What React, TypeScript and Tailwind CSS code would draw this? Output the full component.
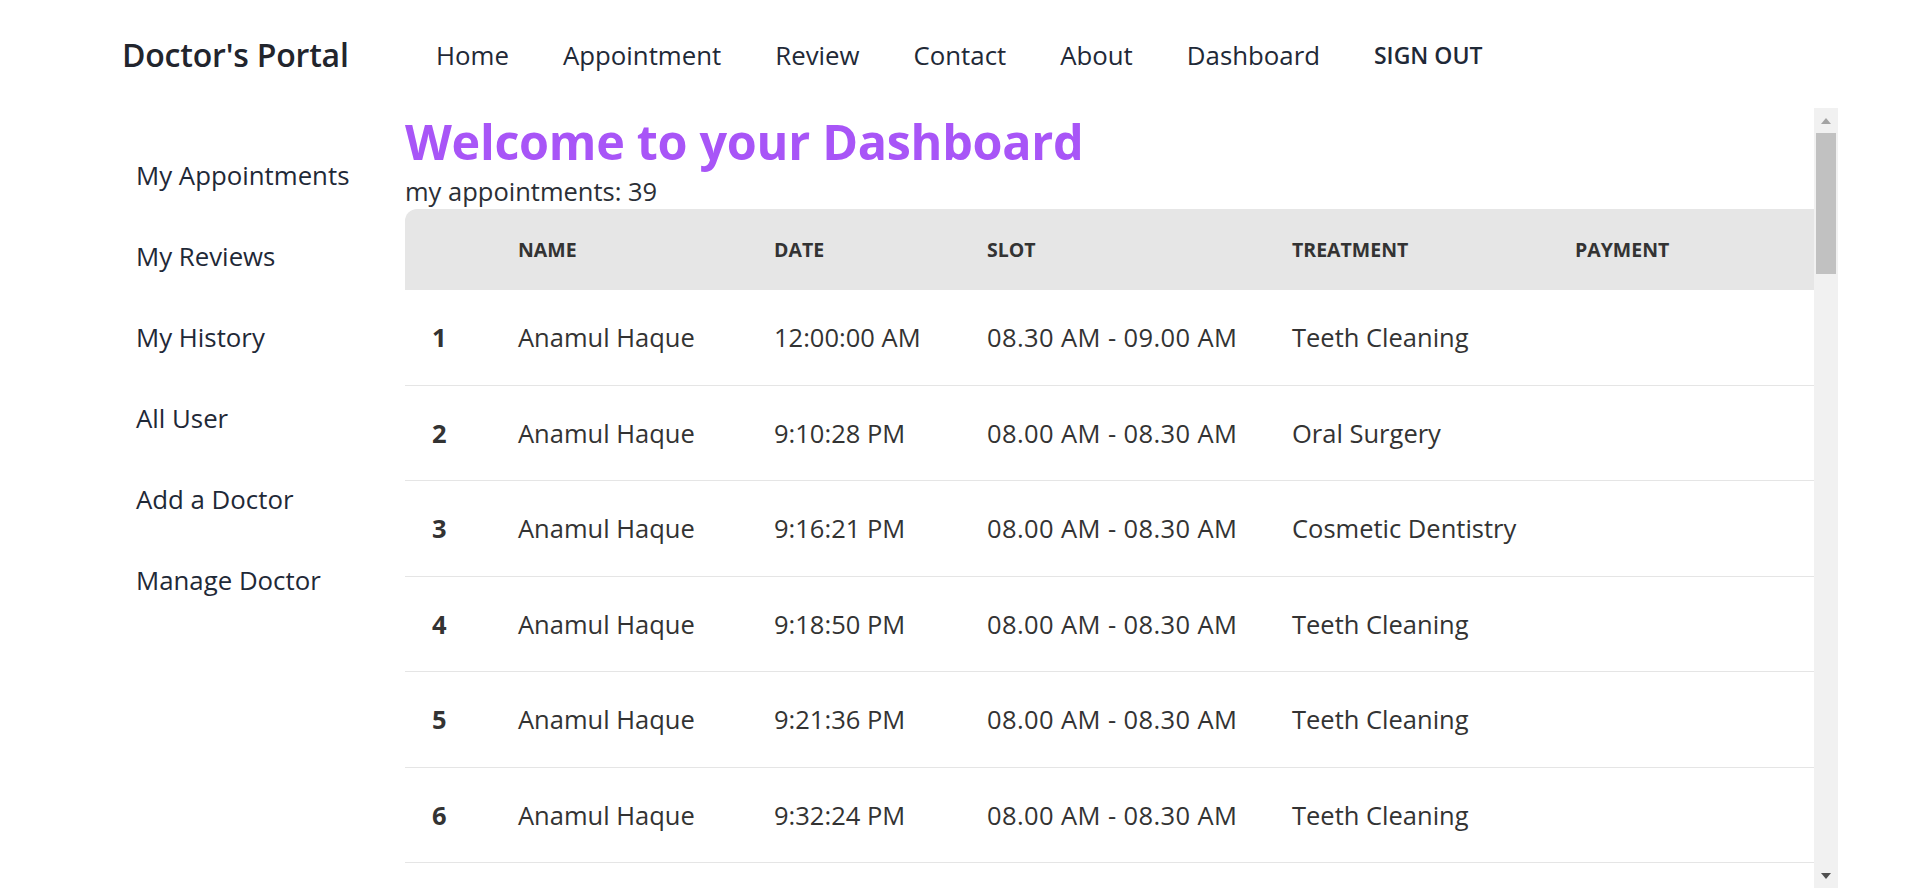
import React from "react";

type Appointment = {
  name: string;
  date: string;
  slot: string;
  treatment: string;
  payment?: string;
};

const firstRows: Appointment[] = [
  { name: "Anamul Haque", date: "12:00:00 AM", slot: "08.30 AM - 09.00 AM", treatment: "Teeth Cleaning" },
  { name: "Anamul Haque", date: "9:10:28 PM", slot: "08.00 AM - 08.30 AM", treatment: "Oral Surgery" },
  { name: "Anamul Haque", date: "9:16:21 PM", slot: "08.00 AM - 08.30 AM", treatment: "Cosmetic Dentistry" },
  { name: "Anamul Haque", date: "9:18:50 PM", slot: "08.00 AM - 08.30 AM", treatment: "Teeth Cleaning" },
  { name: "Anamul Haque", date: "9:21:36 PM", slot: "08.00 AM - 08.30 AM", treatment: "Teeth Cleaning" },
  { name: "Anamul Haque", date: "9:32:24 PM", slot: "08.00 AM - 08.30 AM", treatment: "Teeth Cleaning" },
];

const treatments = ["Teeth Cleaning", "Oral Surgery", "Cosmetic Dentistry", "Teeth Orthodontics", "Cavity Protection"];

const appointments: Appointment[] = [
  ...firstRows,
  ...Array.from({ length: 33 }, (_, i) => ({
    name: "Anamul Haque",
    date: `9:${String(34 + (i % 25)).padStart(2, "0")}:${String((i * 17) % 60).padStart(2, "0")} PM`,
    slot: "08.00 AM - 08.30 AM",
    treatment: treatments[i % treatments.length],
  })),
];

const navLinks = ["Home", "Appointment", "Review", "Contact", "About", "Dashboard"];
const sideLinks = ["My Appointments", "My Reviews", "My History", "All User", "Add a Doctor", "Manage Doctor"];

const cols = "grid grid-cols-[89px_256px_213px_305px_283px_1fr] items-center";

function ScrollBar() {
  return (
    <div className="w-[24px] shrink-0 flex flex-col bg-[#f1f1f1]">
      <div className="h-[25px] flex items-center justify-center">
        <div className="w-0 h-0 border-x-[5.5px] border-x-transparent border-b-[6px] border-b-[#a3a3a3]" />
      </div>
      <div className="h-[141px] mx-[2px] bg-[#c1c1c1]" />
      <div className="flex-1" />
      <div className="h-[25px] flex items-center justify-center">
        <div className="w-0 h-0 border-x-[5.5px] border-x-transparent border-t-[6px] border-t-[#505050]" />
      </div>
    </div>
  );
}

export default function App() {
  return (
    <div className="h-screen flex flex-col bg-white text-[#1f2937] font-['Open_Sans',sans-serif] overflow-hidden">
      {/* navbar */}
      <header className="h-[110px] shrink-0 flex items-center pl-[122px]">
        <div className="w-[287px] text-[32px] font-semibold text-[#22252d] tracking-[-0.2px]">Doctor's Portal</div>
        <ul className="flex items-center">
          {navLinks.map((l) => (
            <li key={l} className="px-[27px] text-[25.8px]">
              {l}
            </li>
          ))}
          <li className="px-[27px] text-[23px] font-semibold">SIGN OUT</li>
        </ul>
      </header>

      <div className="flex-1 min-h-0 flex pl-[122px] pr-[82px] -mt-[2px]">
        {/* sidebar */}
        <aside className="w-[283px] shrink-0 pt-[27px]">
          <ul>
            {sideLinks.map((l) => (
              <li key={l} className="h-[81px] flex items-center pl-[14px] text-[25.8px]">
                {l}
              </li>
            ))}
          </ul>
        </aside>

        {/* main */}
        <main className="flex-1 min-w-0 flex">
          <div className="flex-1 min-w-0 overflow-hidden pt-[8px]">
            <h1 className="text-[48.5px] leading-[50px] font-bold text-[#a855f7] tracking-[-0.3px]">Welcome to your Dashboard</h1>
            <p className="mt-[10px] text-[25.5px] leading-[30px] text-[#2b2f36]">my appointments: {appointments.length}</p>

            <div className="mt-[3px]">
              <div className={`${cols} h-[81px] bg-[#e6e6e6] rounded-tl-[12px] text-[19.5px] font-bold text-[#333] uppercase`}>
                <div />
                <div className="pl-[24px]">Name</div>
                <div className="pl-[24px]">Date</div>
                <div className="pl-[24px]">Slot</div>
                <div className="pl-[24px]">Treatment</div>
                <div className="pl-[24px]">Payment</div>
              </div>
              {appointments.slice(0, 6).map((a, i) => (
                <div key={i} className={`${cols} h-[95.5px] border-b border-[#e5e5e5] text-[25.5px] text-[#333]`}>
                  <div className="pl-[27px] font-bold">{i + 1}</div>
                  <div className="pl-[24px]">{a.name}</div>
                  <div className="pl-[24px]">{a.date}</div>
                  <div className="pl-[24px] tracking-[0.4px]">{a.slot}</div>
                  <div className="pl-[24px]">{a.treatment}</div>
                  <div className="pl-[24px]">{a.payment ?? ""}</div>
                </div>
              ))}
            </div>
          </div>
          <ScrollBar />
        </main>
      </div>
    </div>
  );
}
